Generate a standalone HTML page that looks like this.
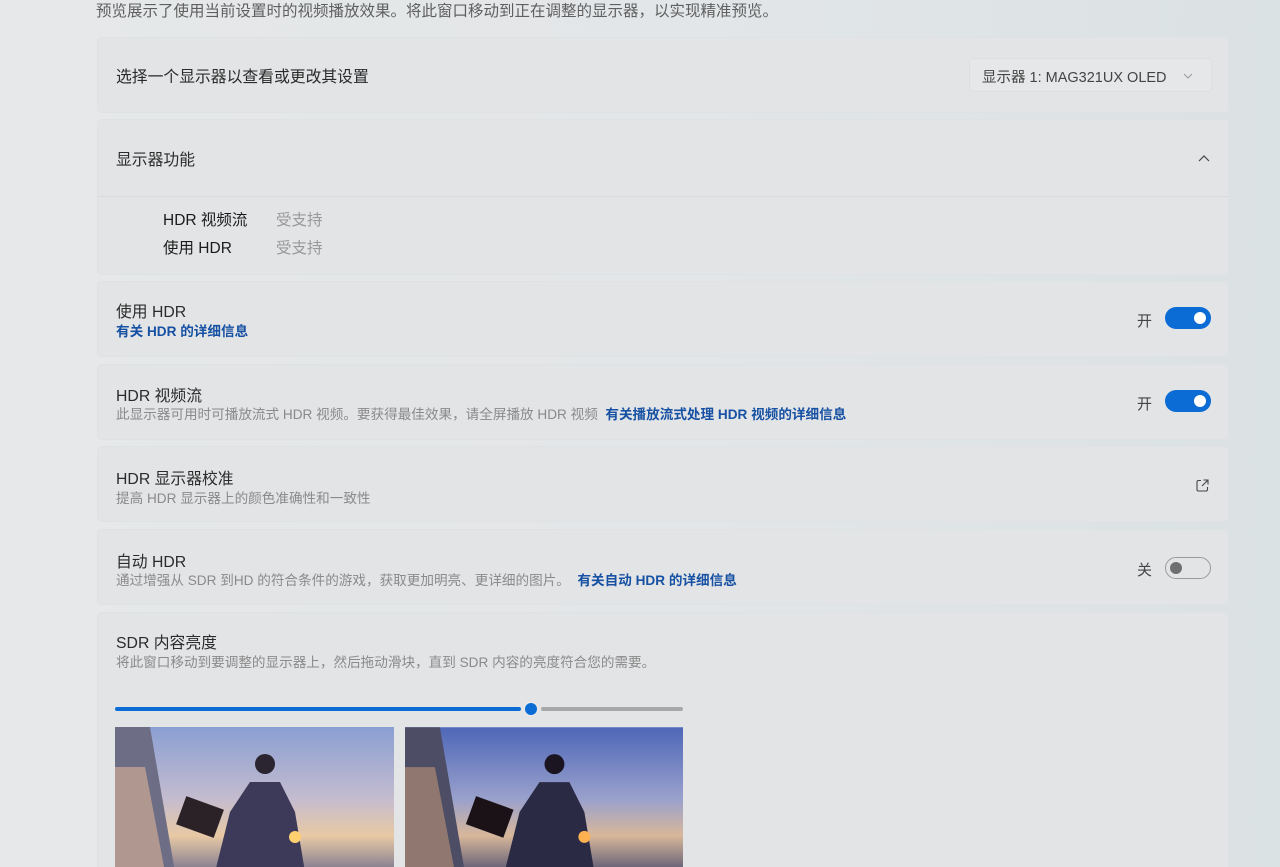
<!DOCTYPE html>
<html><head><meta charset="utf-8"><style>
*{margin:0;padding:0;box-sizing:border-box}
html,body{width:1280px;height:867px;overflow:hidden}
body{background:linear-gradient(90deg,#e6e8e9 0%,#e3e6e8 50%,#dbe2e4 100%);font-family:"Liberation Sans","Noto Sans CJK SC",sans-serif;color:#1b1b1b;position:relative}
.top{position:absolute;left:96px;top:-1px;font-size:15.5px;color:#5f5f5f}
.card{position:absolute;left:97px;width:1132px;background:#e3e4e6;border-radius:5px;border:1px solid #dfe2e3}
.t{position:absolute;left:18px;font-size:15.8px;color:#2b2b2b}
.s{position:absolute;left:18px;font-size:13.6px;color:#8a8a8a;white-space:nowrap}
.s a{color:#1651a3;font-weight:bold;text-decoration:none}
.tog{position:absolute;right:17px;width:46px;height:22px;border-radius:11px;background:#0a6cd4}
.tog::after{content:"";position:absolute;right:5px;top:5px;width:12px;height:12px;border-radius:50%;background:#fff}
.tog.off{background:transparent;border:1px solid #9a9a9a}
.tog.off::after{left:4px;right:auto;top:4px;background:#6f6f6f}
.lab{position:absolute;right:76px;font-size:15px;color:#444}
</style></head><body>
<div class="top">预览展示了使用当前设置时的视频播放效果。将此窗口移动到正在调整的显示器，以实现精准预览。</div>

<div class="card" style="top:37px;height:76px">
<div class="t" style="top:26px">选择一个显示器以查看或更改其设置</div>
<div style="position:absolute;left:871px;top:20px;width:243px;height:34px;border-radius:4px;background:#e6e7e9;border:1px solid #dcdedf;font-size:14.5px;color:#444;padding:7px 0 0 12px">显示器 1: MAG321UX OLED<svg style="position:absolute;right:18px;top:14px" width="10" height="6"><path d="M1 1L5 5L9 1" stroke="#999" fill="none" stroke-width="1"/></svg></div>
</div>

<div class="card" style="top:119px;height:156px">
<div class="t" style="top:27px">显示器功能</div>
<svg style="position:absolute;right:18px;top:34px" width="12" height="8"><path d="M1 7L6 2L11 7" stroke="#444" fill="none" stroke-width="1.2"/></svg>
<div style="position:absolute;left:0;right:0;top:76px;height:1px;background:#d8dbdd"></div>
<div style="position:absolute;left:65px;top:88px;font-size:15.5px">HDR 视频流</div>
<div style="position:absolute;left:178px;top:88px;font-size:15.5px;color:#999">受支持</div>
<div style="position:absolute;left:65px;top:116px;font-size:15.5px">使用 HDR</div>
<div style="position:absolute;left:178px;top:116px;font-size:15.5px;color:#999">受支持</div>
</div>

<div class="card" style="top:281px;height:76px">
<div class="t" style="top:17px">使用 HDR</div>
<div class="s" style="top:38px"><a>有关 HDR 的详细信息</a></div>
<div class="lab" style="top:28px">开</div><div class="tog" style="top:25px"></div>
</div>

<div class="card" style="top:364px;height:76px">
<div class="t" style="top:18px">HDR 视频流</div>
<div class="s" style="top:38px">此显示器可用时可播放流式 HDR 视频。要获得最佳效果，请全屏播放 HDR 视频&nbsp;&nbsp;<a>有关播放流式处理 HDR 视频的详细信息</a></div>
<div class="lab" style="top:28px">开</div><div class="tog" style="top:25px"></div>
</div>

<div class="card" style="top:446px;height:76px">
<div class="t" style="top:19px">HDR 显示器校准</div>
<div class="s" style="top:40px">提高 HDR 显示器上的颜色准确性和一致性</div>
<svg style="position:absolute;right:18px;top:31px" width="15" height="15"><path d="M6 2.5H3.5A1.5 1.5 0 0 0 2 4v7.5A1.5 1.5 0 0 0 3.5 13H11a1.5 1.5 0 0 0 1.5-1.5V9M8.5 2H13V6.5M13 2L7 8" stroke="#444" fill="none" stroke-width="1.1"/></svg>
</div>

<div class="card" style="top:529px;height:76px">
<div class="t" style="top:19px">自动 HDR</div>
<div class="s" style="top:39px">通过增强从 SDR 到HD 的符合条件的游戏，获取更加明亮、更详细的图片。&nbsp;&nbsp;<a>有关自动 HDR 的详细信息</a></div>
<div class="lab" style="top:29px">关</div><div class="tog off" style="top:27px"></div>
</div>

<div class="card" style="top:612px;height:270px">
<div class="t" style="top:17px">SDR 内容亮度</div>
<div class="s" style="top:38px">将此窗口移动到要调整的显示器上，然后拖动滑块，直到 SDR 内容的亮度符合您的需要。</div>
<div style="position:absolute;left:17px;top:94px;width:406px;height:4px;border-radius:2px;background:#0a6cd4"></div>
<div style="position:absolute;left:443px;top:94px;width:142px;height:4px;border-radius:2px;background:#a8a8a8"></div>
<div style="position:absolute;left:427px;top:90px;width:12px;height:12px;border-radius:50%;background:#0a6cd4;box-shadow:0 0 0 2px #e8e8e8"></div>
<svg style="position:absolute;left:17px;top:114px" width="279" height="145" viewBox="0 0 279 145"><defs><linearGradient id="a" x1="0" y1="0" x2="0" y2="1"><stop offset="0" stop-color="#8a9fd2"/><stop offset=".5" stop-color="#c5bccf"/><stop offset=".75" stop-color="#e8c9a4"/><stop offset="1" stop-color="#7d7890"/></linearGradient></defs><rect width="279" height="145" fill="url(#a)"/><path d="M0 0h35L60 145H0z" fill="#6d6d85"/><path d="M0 40h30l20 105H0z" fill="#b09890"/><path d="M100 145l15-60 20-30h30l15 30 10 60z" fill="#3c3a58"/><circle cx="150" cy="37" r="10" fill="#2a2530"/><rect x="65" y="75" width="40" height="30" fill="#2a2227" transform="rotate(20 85 90)"/><circle cx="180" cy="110" r="6" fill="#ffd070"/></svg>
<svg style="position:absolute;left:307px;top:114px" width="278" height="145" viewBox="0 0 279 145"><defs><linearGradient id="b" x1="0" y1="0" x2="0" y2="1"><stop offset="0" stop-color="#4e67b8"/><stop offset=".5" stop-color="#9aa1cc"/><stop offset=".75" stop-color="#d8b79a"/><stop offset="1" stop-color="#5d5a75"/></linearGradient></defs><rect width="279" height="145" fill="url(#b)"/><path d="M0 0h35L60 145H0z" fill="#4d4d65"/><path d="M0 40h30l20 105H0z" fill="#907870"/><path d="M100 145l15-60 20-30h30l15 30 10 60z" fill="#2a2a45"/><circle cx="150" cy="37" r="10" fill="#1a1520"/><rect x="65" y="75" width="40" height="30" fill="#1a1217" transform="rotate(20 85 90)"/><circle cx="180" cy="110" r="6" fill="#ffb050"/></svg>
</div>
</body></html>
